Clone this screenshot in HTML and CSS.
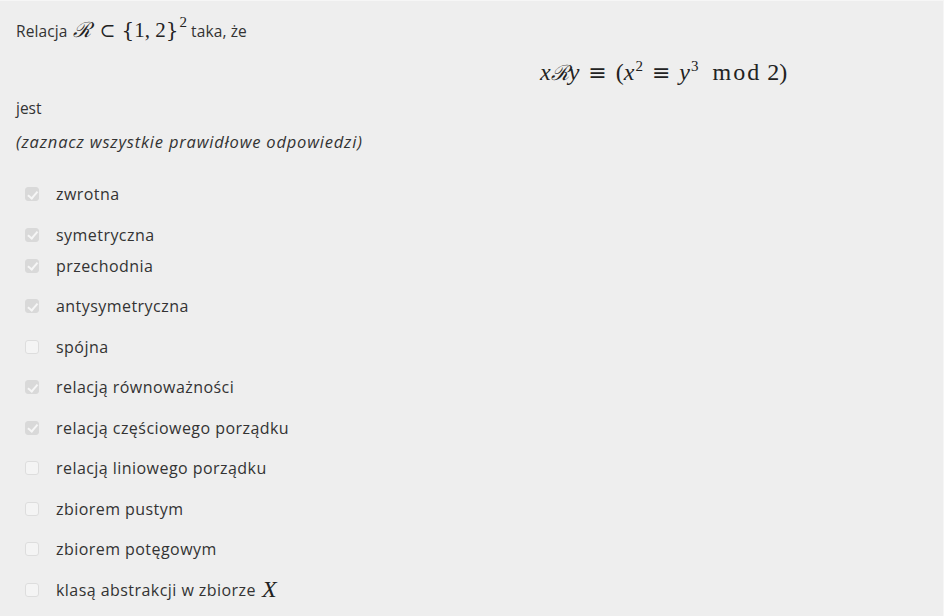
FILE: index.html
```html
<!DOCTYPE html>
<html lang="pl">
<head>
<meta charset="utf-8">
<link rel="stylesheet" href="styles.css">
</head>
<body>
<div class="page">
  <p class="intro">Relacja <span class="math"><span class="cal">ℛ</span><span class="rel">⊂</span><span class="br">{</span>1, 2<span class="br">}</span><sup>2</sup></span> taka, że</p>
  <div class="display"><span class="math big"><i>x</i><span class="cal">ℛ</span><i>y</i><span class="rel">≡</span>(<i>x</i><sup>2</sup><span class="rel">≡</span><i>y</i><sup>3</sup><span class="mod">mod</span>2)</span></div>
  <p class="jest">jest</p>
  <p class="hint">(zaznacz wszystkie prawidłowe odpowiedzi)</p>
  <ul class="options">
    <li class="opt"><span class="box on"></span>zwrotna</li>
    <li class="opt tight"><span class="box on"></span>symetryczna</li>
    <li class="opt"><span class="box on"></span>przechodnia</li>
    <li class="opt"><span class="box on"></span>antysymetryczna</li>
    <li class="opt"><span class="box"></span>spójna</li>
    <li class="opt"><span class="box on"></span>relacją równoważności</li>
    <li class="opt"><span class="box on"></span>relacją częściowego porządku</li>
    <li class="opt"><span class="box"></span>relacją liniowego porządku</li>
    <li class="opt"><span class="box"></span>zbiorem pustym</li>
    <li class="opt"><span class="box"></span>zbiorem potęgowym</li>
    <li class="opt"><span class="box"></span>klasą abstrakcji w zbiorze <span class="math"><i class="bigx">X</i></span></li>
  </ul>
</div>
</body>
</html>
```
FILE: styles.css
```css
html, body {
  margin: 0;
  padding: 0;
  background: #eeeeee;
}
body {
  font-family: "Open Sans", "Noto Sans", sans-serif;
  font-size: 16px;
  color: #333333;
}
.page {
  width: 944px;
  height: 616px;
  box-sizing: border-box;
  padding: 14px 16px 0 16px;
  border-top: 1px solid #f6f6f6;
  border-right: 1px solid #f6f6f6;
  overflow: hidden;
}
p { margin: 0; }
.intro {
  line-height: 30px;
  height: 30px;
  font-size: 15.5px;
  letter-spacing: 0.1px;
}
.math {
  font-family: "Liberation Serif", serif;
  font-size: 22px;
  letter-spacing: 0;
  color: #222;
}
.math i { font-family: "Liberation Serif", serif; font-style: italic; font-size: 24px; }
.math sup { font-size: 15px; vertical-align: 9px; line-height: 0; font-family: "Liberation Serif", serif; margin-left: 1px; }
.cal { font-family: "DejaVu Serif", serif; font-style: italic; font-size: 21px; }
.rel { font-family: "DejaVu Serif", serif; font-size: 22px; margin: 0 9px; }
.br { font-family: "DejaVu Serif", serif; font-size: 20px; }
.intro .math { font-size: 21px; }
.intro .rel { font-size: 19px; margin: 0 6px 0 9px; }
.intro .math sup { font-size: 15px; vertical-align: 10px; }
.intro .cal { margin-left: 1px; }
.display {
  padding-left: 524px;
  height: 36px;
  line-height: 36px;
  margin-top: 9px;
}
.big { font-size: 24px; }
.mod { margin-left: 14px; margin-right: 6px; letter-spacing: 2px; }
.jest {
  margin-top: 7px;
  line-height: 22px;
  font-size: 15.5px;
}
.hint {
  margin-top: 12px;
  font-style: italic;
  line-height: 22px;
  font-size: 16.5px;
  letter-spacing: 0.8px;
}
.options {
  list-style: none;
  margin: 30px 0 0 0;
  padding: 0;
}
.opt {
  display: flex;
  align-items: center;
  height: 22px;
  margin-bottom: 18.5px;
  padding-left: 9px;
  font-size: 16px;
  letter-spacing: 0.45px;
}
.opt.tight { margin-bottom: 9px; }
.box {
  width: 14px;
  height: 14px;
  box-sizing: border-box;
  border-radius: 3px;
  margin-right: 17px;
  background: #f4f4f4;
  border: 1px solid #dddddd;
  position: relative;
  flex: none;
}
.box.on {
  background: #d9d9d9;
  border-color: #d9d9d9;
}
.box.on::after {
  content: "";
  position: absolute;
  left: 3.5px;
  top: 0.5px;
  width: 3.5px;
  height: 7.5px;
  border: solid #f6f6f6;
  border-width: 0 2px 2px 0;
  transform: rotate(40deg);
}
.bigx { font-size: 25px; margin-left: 6px; }
```
